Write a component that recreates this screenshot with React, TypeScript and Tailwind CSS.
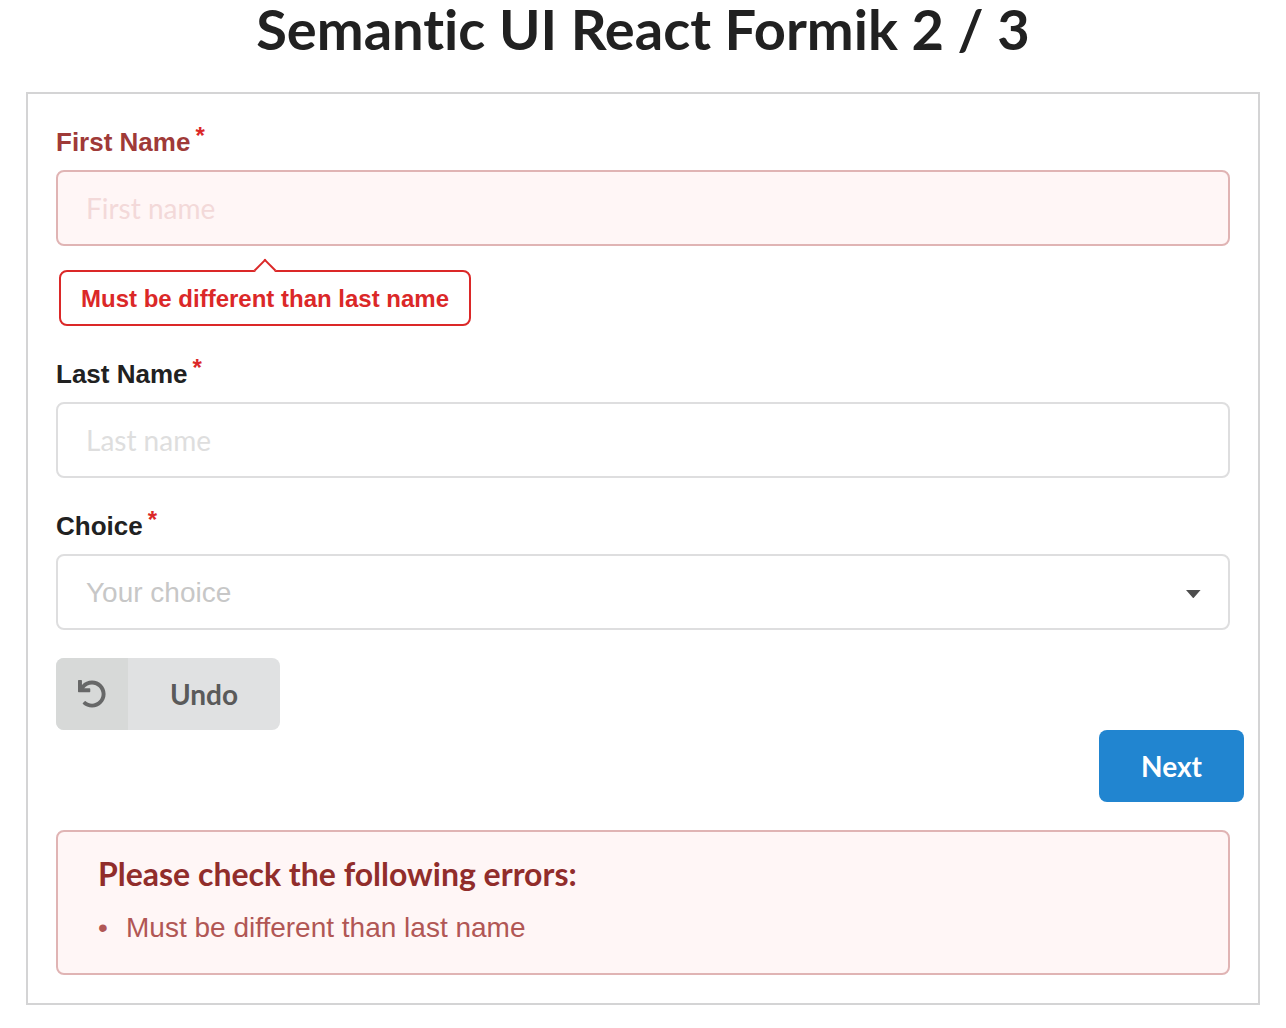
import React from "react";

const sans = "font-['Liberation_Sans',Arial,sans-serif]";

function Label({ id, error, children }: { id: string; error?: boolean; children: string }) {
  return (
    <label
      htmlFor={id}
      className={`mb-2 flex h-10 w-fit items-center text-[26px] leading-9 font-bold ${sans} ${error ? "text-[#9f3a38]" : "text-[#212121]"}`}
    >
      {children}
      <span aria-hidden="true" className="ml-[5px] self-start text-[24px] leading-7 text-[#db2828]">*</span>
    </label>
  );
}

export default function App() {
  return (
    <main className="font-[Lato,sans-serif] text-[28px] text-[#212121] [font-variant-ligatures:none]">
      <h1 className="text-center text-[56px] leading-[58px] font-bold">Semantic UI React Formik 2 / 3</h1>
      <form
        className="mx-[26px] mt-[34px] border-2 border-[#d4d4d5] p-7"
        onSubmit={(e) => e.preventDefault()}
      >
        <div className="mb-7">
          <Label id="first" error>First Name</Label>
          <input
            id="first"
            placeholder="First name"
            className="block h-[76px] w-full rounded-lg border-2 border-[#e0b4b4] bg-[#fff6f6] px-7 text-[28px] text-[#9f3a38] outline-none placeholder:text-[#f3d9d9]"
          />
          <div
            role="alert"
            className={`relative mt-6 ml-[3px] flex h-14 w-fit items-center rounded-lg border-2 border-[#db2828] bg-white px-5 pt-0.5 text-[24px] leading-6 font-bold text-[#db2828] ${sans}`}
          >
            <span className="absolute -top-[10px] left-1/2 size-4 -translate-x-1/2 rotate-45 border-t-2 border-l-2 border-[#db2828] bg-white" />
            Must be different than last name
          </div>
        </div>
        <div className="mb-7">
          <Label id="last">Last Name</Label>
          <input
            id="last"
            placeholder="Last name"
            className="block h-[76px] w-full rounded-lg border-2 border-[#dededf] bg-white px-7 text-[28px] outline-none placeholder:text-[#dedede]"
          />
        </div>
        <div className="mb-7">
          <Label id="choice">Choice</Label>
          <div className="relative">
            <select
              id="choice"
              defaultValue=""
              className={`block h-[76px] w-full appearance-none rounded-lg border-2 border-[#dededf] bg-white px-7 pt-0.5 text-[28px] text-[#c7c7c7] outline-none ${sans}`}
            >
              <option value="">Your choice</option>
            </select>
            <svg className="pointer-events-none absolute top-9 right-7 h-2 w-4" viewBox="0 0 16 8" aria-hidden="true">
              <path d="M0 0h14.6L7.8 7.7c-.3.4-.7.4-1 0Z" fill="#4d4d4d" />
            </svg>
          </div>
        </div>
        <button type="button" className="flex h-[72px] overflow-hidden rounded-lg bg-[#e0e1e2] font-bold text-[#5a5a5a]">
          <span className="flex h-full w-[72px] items-center justify-center bg-[#d7d9d8]">
            <svg className="size-7" viewBox="0 0 512 512" aria-hidden="true">
              <path fill="#676868" d="M212.333 224.333H12c-6.627 0-12-5.373-12-12V12C0 5.373 5.373 0 12 0h48c6.627 0 12 5.373 12 12v78.112C117.773 39.279 184.26 7.47 258.175 8.007c136.906.994 246.448 111.623 246.157 248.532C504.041 393.258 393.12 504 256.333 504c-64.089 0-122.496-24.313-166.51-64.215-5.099-4.622-5.334-12.554-.467-17.42l33.967-33.967c4.474-4.474 11.662-4.717 16.401-.525C170.76 415.336 211.58 432 256.333 432c97.268 0 176-78.716 176-176 0-97.267-78.716-176-176-176-58.496 0-110.28 28.476-142.274 72.333h98.274c6.627 0 12 5.373 12 12v48c0 6.627-5.373 12-12 12z" />
            </svg>
          </span>
          <span className="flex h-full items-center px-[42px]">Undo</span>
        </button>
        <div className="-mr-3.5 mb-7 flex justify-end">
          <button type="submit" className="h-[72px] rounded-lg bg-[#2185d0] px-[42px] font-bold text-white">Next</button>
        </div>
        <section className="rounded-lg border-2 border-[#e0b4b4] bg-[#fff6f6] px-10 pt-[22px] pb-[27px] text-[#9f3a38]">
          <h2 className="text-[32px] leading-10 font-bold text-[#912d2b]">Please check the following errors:</h2>
          <ul className={`mt-4 ${sans}`}>
            <li className="flex h-9 items-center text-[28px] leading-9 text-[#b15755]">
              <span aria-hidden="true" className="w-7">•</span>
              Must be different than last name
            </li>
          </ul>
        </section>
      </form>
    </main>
  );
}
